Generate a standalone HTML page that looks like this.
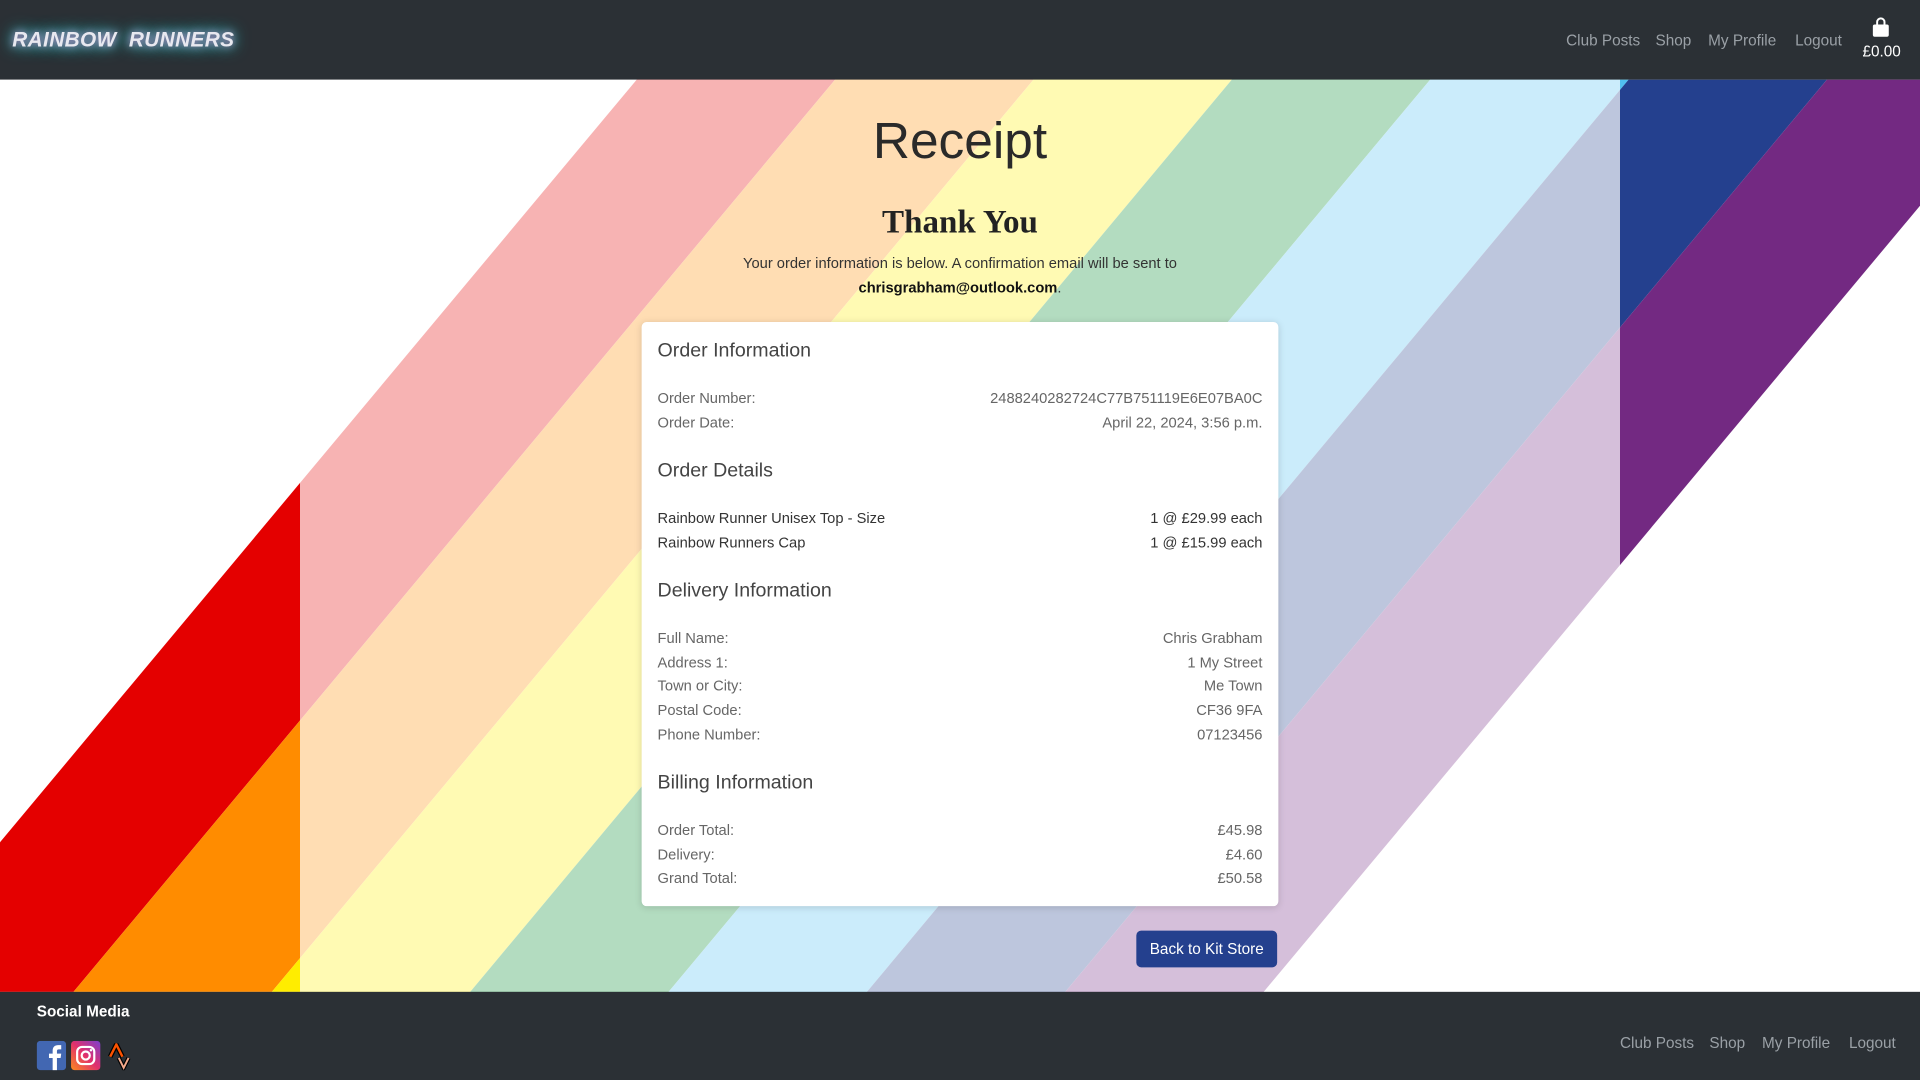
<!DOCTYPE html>
<html><head><meta charset="utf-8"><style>
html,body{margin:0;padding:0;width:1920px;height:1080px;overflow:hidden;background:#fff}
#w{position:absolute;left:0;top:0;width:1568px;height:882px;transform:scale(1.2244898);transform-origin:0 0;font-family:"Liberation Sans",sans-serif;overflow:hidden}
.hdr{position:absolute;left:0;top:0;width:1568px;height:65px;background:#2b3035}
.logo{position:absolute;left:10px;top:23px;font-size:17px;font-weight:bold;font-style:italic;color:#e8e8f0;letter-spacing:0.3px;text-shadow:0 0 6px #c080c0,0 0 10px #30c0c0,0 0 14px #30c0c0}
.nav a{position:absolute;color:#9aa0a6;font-size:12.5px;text-decoration:none}
.bg{position:absolute;left:0;top:0}
.c{position:absolute;text-align:center;left:0;width:1568px;color:#222}
.card{position:absolute;left:524px;top:263px;width:520px;height:477px;background:#fff;border-radius:4px;box-shadow:0 1px 6px rgba(0,0,0,.15)}
.h{position:absolute;left:13px;font-size:16px;color:#444;top:0}
.r{position:absolute;left:13px;right:13px;font-size:12px;color:#666}
.r span:last-child{position:absolute;right:0}
.btn{position:absolute;left:928px;top:760px;width:115px;height:30px;background:#24408e;border-radius:4px;color:#fff;font-size:12.5px;line-height:30px;text-align:center}
.ftr{position:absolute;left:0;top:810px;width:1568px;height:72px;background:#2b3035}
</style></head><body><div id="w">
<svg class="bg" width="1568" height="882" viewBox="0 0 1568 882">
<polygon points="520,65 682,65 60,810 -102,810" fill="#e40000"/>
<polygon points="682,65 844,65 222,810 60,810" fill="#ff8c00"/>
<polygon points="844,65 1006,65 384,810 222,810" fill="#ffed00"/>
<polygon points="1006,65 1168,65 546,810 384,810" fill="#008a2d"/>
<polygon points="1168,65 1330,65 708,810 546,810" fill="#50c0f0"/>
<polygon points="1330,65 1492,65 870,810 708,810" fill="#24408e"/>
<polygon points="1492,65 1654,65 1032,810 870,810" fill="#732982"/>
<rect x="245" y="65" width="1078" height="745" fill="#fff" opacity="0.7"/>
</svg>
<div class="hdr"><div class="logo">RAINBOW&nbsp; RUNNERS</div>
<div class="nav"><a style="left:1279px;top:26px">Club Posts</a><a style="left:1352px;top:26px">Shop</a><a style="left:1395px;top:26px">My Profile</a><a style="left:1466px;top:26px">Logout</a></div>
<svg style="position:absolute;left:1528px;top:14px" width="16" height="17" viewBox="0 0 16 17"><path d="M5 6V4a3 3 0 0 1 6 0v2" stroke="#fff" stroke-width="1.6" fill="none"/><rect x="1.5" y="6" width="13" height="10" rx="1.5" fill="#fff"/></svg>
<div style="position:absolute;left:1521px;top:35px;color:#fff;font-size:12.5px">£0.00</div></div>
<div class="c" style="top:91px;font-size:42px;color:#2a2a2a">Receipt</div>
<div class="c" style="top:166px;font-size:27px;font-weight:bold;font-family:'Liberation Serif',serif">Thank You</div>
<div class="c" style="top:205px;font-size:12px;line-height:20px;color:#333">Your order information is below. A confirmation email will be sent to<br><b style="color:#111">chrisgrabham@outlook.com</b>.</div>
<div class="card">
<div class="h" style="top:15px">Order Information</div>
<div class="r" style="top:55px"><span>Order Number:</span><span>2488240282724C77B751119E6E07BA0C</span></div>
<div class="r" style="top:75px"><span>Order Date:</span><span>April 22, 2024, 3:56 p.m.</span></div>
<div class="h" style="top:113px">Order Details</div>
<div class="r" style="top:153px;color:#333"><span>Rainbow Runner Unisex Top - Size</span><span>1 @ £29.99 each</span></div>
<div class="r" style="top:173px;color:#333"><span>Rainbow Runners Cap</span><span>1 @ £15.99 each</span></div>
<div class="h" style="top:211px">Delivery Information</div>
<div class="r" style="top:251px"><span>Full Name:</span><span>Chris Grabham</span></div>
<div class="r" style="top:271px"><span>Address 1:</span><span>1 My Street</span></div>
<div class="r" style="top:290px"><span>Town or City:</span><span>Me Town</span></div>
<div class="r" style="top:310px"><span>Postal Code:</span><span>CF36 9FA</span></div>
<div class="r" style="top:330px"><span>Phone Number:</span><span>07123456</span></div>
<div class="h" style="top:368px">Billing Information</div>
<div class="r" style="top:408px"><span>Order Total:</span><span>£45.98</span></div>
<div class="r" style="top:428px"><span>Delivery:</span><span>£4.60</span></div>
<div class="r" style="top:447px"><span>Grand Total:</span><span>£50.58</span></div>
</div>
<div class="btn">Back to Kit Store</div>
<div class="ftr">
<div style="position:absolute;left:30px;top:9px;color:#fff;font-weight:bold;font-size:12.5px">Social Media</div>
<svg style="position:absolute;left:30px;top:40px" width="24" height="24" viewBox="0 0 24 24"><rect width="24" height="24" rx="3" fill="#4267b2"/><path d="M13 24V14h-3v-3.5h3V8c0-3 1.8-4.5 4.5-4.5H20V7h-2c-1.2 0-1.5.6-1.5 1.5v2H20l-.5 3.5h-3V24z" fill="#fff"/></svg>
<svg style="position:absolute;left:58px;top:40px" width="24" height="24" viewBox="0 0 24 24"><defs><linearGradient id="ig" x1="0" y1="1" x2="1" y2="0"><stop offset="0" stop-color="#fd8a1f"/><stop offset=".5" stop-color="#e1306c"/><stop offset="1" stop-color="#7b3fd0"/></linearGradient></defs><rect width="24" height="24" rx="3" fill="url(#ig)"/><rect x="5" y="5" width="14" height="14" rx="4" stroke="#fff" stroke-width="1.8" fill="none"/><circle cx="12" cy="12" r="3.3" stroke="#fff" stroke-width="1.8" fill="none"/><circle cx="16.3" cy="7.7" r="1" fill="#fff"/></svg>
<svg style="position:absolute;left:88px;top:42px" width="20" height="22" viewBox="0 0 20 22"><path d="M2 11L7 1l5 10" stroke="#000" stroke-width="4" fill="none"/><path d="M2 11L7 1l5 10" stroke="#fc5200" stroke-width="2" fill="none"/><path d="M9 12l4 8 4-8" stroke="#000" stroke-width="3.5" fill="none"/><path d="M9 12l4 8 4-8" stroke="#f4a98a" stroke-width="1.6" fill="none"/></svg>
<div class="nav"><a style="left:1323px;top:35px">Club Posts</a><a style="left:1396px;top:35px">Shop</a><a style="left:1439px;top:35px">My Profile</a><a style="left:1510px;top:35px">Logout</a></div>
</div>
</div></body></html>
